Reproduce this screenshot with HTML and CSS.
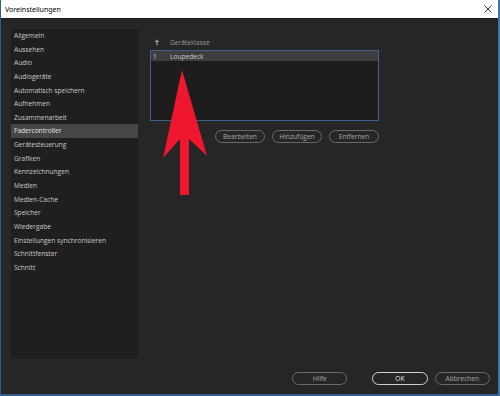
FILE: index.html
```html
<!DOCTYPE html>
<html lang="de">
<head>
<meta charset="utf-8">
<title>Voreinstellungen</title>
<link rel="stylesheet" href="styles.css">
</head>
<body>
<div class="window">
  <div class="titlebar">
    <span class="title">Voreinstellungen</span>
    <svg class="close" width="8" height="8" viewBox="0 0 8 8"><path d="M0.5 0.5 L7.5 7.5 M7.5 0.5 L0.5 7.5" stroke="#333" stroke-width="1" fill="none"/></svg>
  </div>
  <div class="main">
    <div class="content">
      <ul class="sidebar">
        <li>Allgemein</li>
        <li>Aussehen</li>
        <li>Audio</li>
        <li>Audiogeräte</li>
        <li>Automatisch speichern</li>
        <li>Aufnehmen</li>
        <li>Zusammenarbeit</li>
        <li class="selected">Fadercontroller</li>
        <li>Gerätesteuerung</li>
        <li>Grafiken</li>
        <li>Kennzeichnungen</li>
        <li>Medien</li>
        <li>Medien-Cache</li>
        <li>Speicher</li>
        <li>Wiedergabe</li>
        <li>Einstellungen synchronisieren</li>
        <li>Schnittfenster</li>
        <li>Schnitt</li>
      </ul>
      <div class="panel">
        <div class="colhead">
          <svg class="sort" width="6" height="7" viewBox="0 0 6 7"><path d="M3 0.5 L5.5 3 L3.6 3 L3.6 6.5 L2.4 6.5 L2.4 3 L0.5 3 Z" fill="#9a9a9a"/></svg>
          <span>Geräteklasse</span>
        </div>
        <div class="listbox">
          <div class="row selected"><span class="idx">1</span><span>Loupedeck</span></div>
        </div>
        <div class="actions">
          <button class="pill">Bearbeiten</button>
          <button class="pill">Hinzufügen</button>
          <button class="pill">Entfernen</button>
        </div>
      </div>
    </div>
    <div class="footer">
      <button class="pill wide">Hilfe</button>
      <span class="spacer"></span>
      <button class="pill wide primary">OK</button>
      <button class="pill wide">Abbrechen</button>
    </div>
  </div>
  <svg class="arrow" width="500" height="396" viewBox="0 0 500 396">
    <polygon points="182,70 207,156 189,139 189,195 180,195 180,139 163,158" fill="#ef1630"/>
  </svg>
</div>
</body>
</html>
```

FILE: styles.css
```css
* { box-sizing: border-box; }
html, body { margin: 0; padding: 0; }
body {
  width: 500px;
  height: 396px;
  overflow: hidden;
  background: #262626;
  font-family: "Open Sans", "Noto Sans", sans-serif;
}
.window {
  position: relative;
  width: 500px;
  height: 396px;
  display: flex;
  flex-direction: column;
  border-left: 1px solid #2e5d8c;
  border-right: 2px solid #3a76b0;
  border-bottom: 2px solid #2e5d8c;
  background: #262626;
}
.titlebar {
  height: 19px;
  flex: none;
  background: #ffffff;
  display: flex;
  align-items: center;
  padding-left: 4px;
  padding-right: 6px;
  border-bottom: 1px solid #1a1a1a;
}
.title {
  font-family: "Noto Sans", "Open Sans", sans-serif;
  font-size: 7px;
  color: #000;
  flex: 1;
}
.close { flex: none; }
.main {
  flex: 1;
  display: flex;
  flex-direction: column;
  padding: 10px 8px 0 10px;
}
.content {
  display: flex;
  gap: 12px;
}
.sidebar {
  list-style: none;
  margin: 0;
  padding: 0;
  width: 127px;
  height: 330px;
  background: #1f1f1f;
  flex: none;
}
.sidebar li {
  height: 13.65px;
  line-height: 13.65px;
  padding-left: 3px;
  font-size: 6.6px;
  color: #c9c9c9;
  white-space: nowrap;
}
.sidebar li.selected {
  background: #464646;
  color: #e4e4e4;
}
.panel {
  width: 229px;
  display: flex;
  flex-direction: column;
}
.colhead {
  height: 21px;
  display: flex;
  align-items: center;
  padding-top: 6px;
  font-size: 6.6px;
  color: #9a9a9a;
}
.sort { margin-left: 4px; margin-right: 10px; }
.listbox {
  height: 71px;
  background: #1d1d1d;
  border: 1px solid #3c5f90;
}
.row {
  height: 10px;
  display: flex;
  align-items: center;
  font-size: 6.6px;
  color: #c9c9c9;
}
.row.selected { background: #3d3d3d; }
.idx { width: 19px; padding-left: 2px; }
.actions {
  display: flex;
  justify-content: flex-end;
  gap: 7px;
  margin-top: 9px;
}
.pill {
  height: 13px;
  width: 50px;
  padding: 0;
  border: 1px solid #6a6a6a;
  border-radius: 7px;
  background: transparent;
  color: #a6a6a6;
  font-family: "Open Sans", "Noto Sans", sans-serif;
  font-size: 6.6px;
  line-height: 11px;
  text-align: center;
}
.footer {
  display: flex;
  align-items: center;
  margin-top: 13px;
  padding-left: 281px;
  gap: 7px;
}
.pill.wide { width: 56px; }
.spacer { width: 11px; }
.pill.primary {
  border-color: #d0d0d0;
  color: #e6e6e6;
}
.arrow {
  position: absolute;
  left: -1px;
  top: 0;
  pointer-events: none;
}
```
